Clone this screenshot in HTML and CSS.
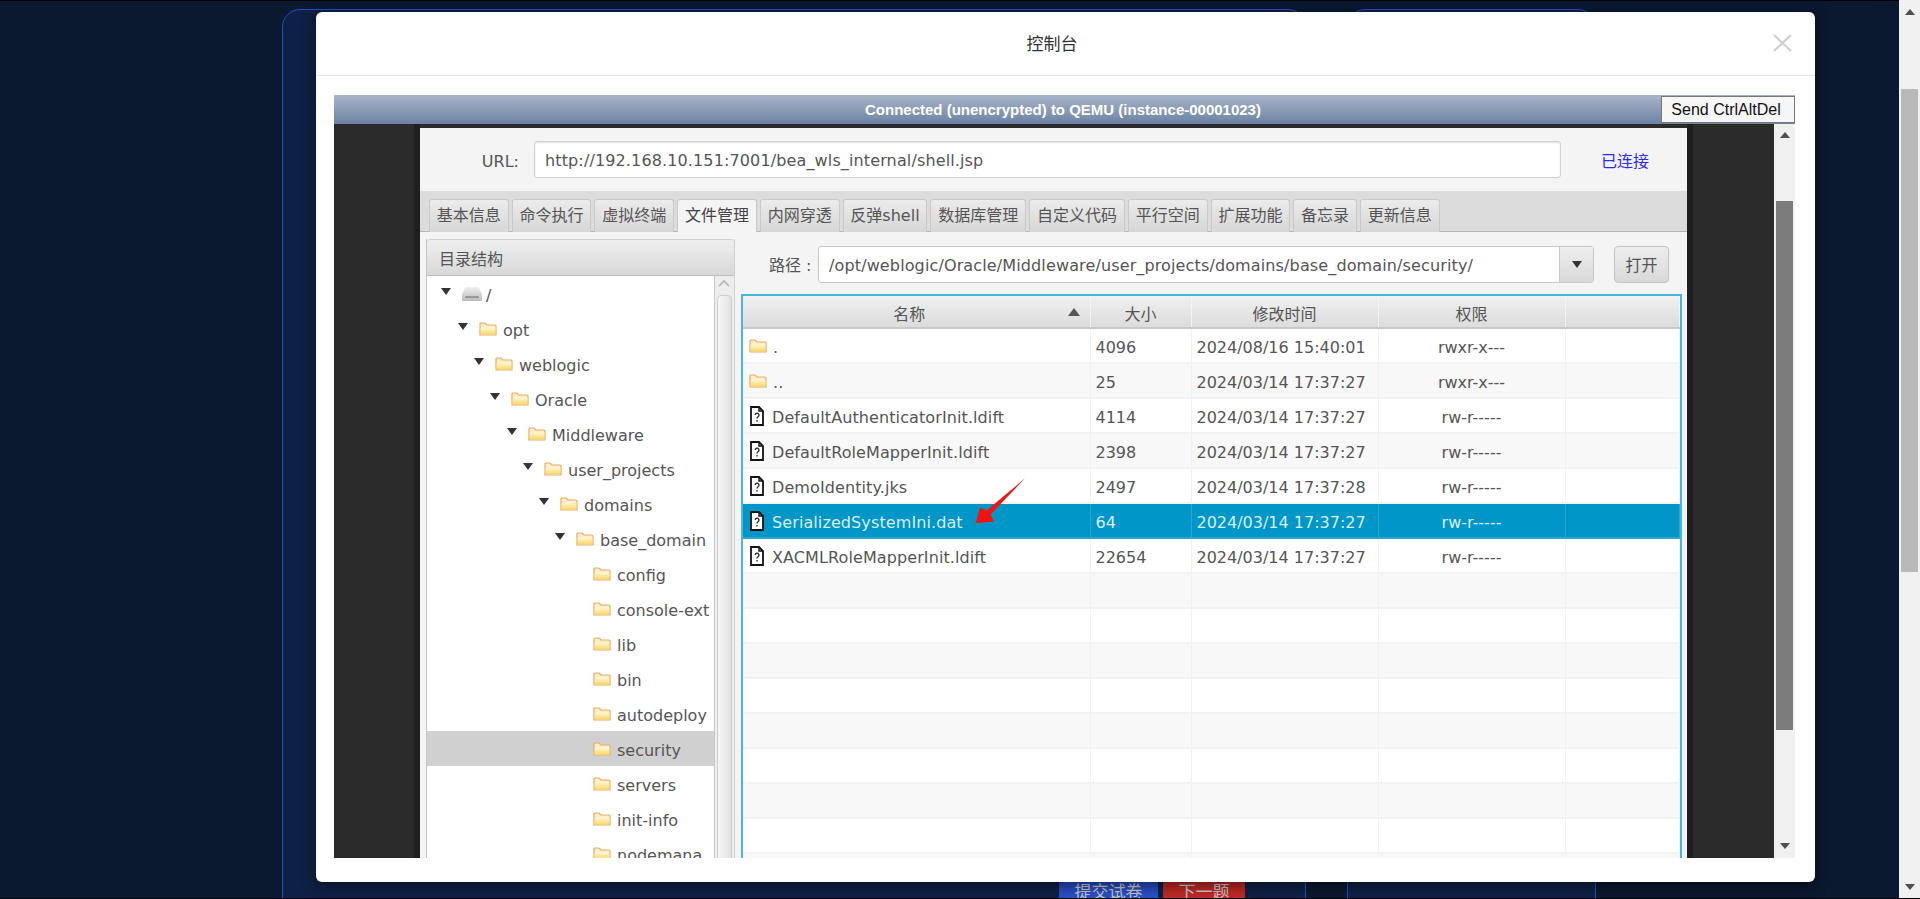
FILE: index.html
```html
<!DOCTYPE html>
<html lang="en">
<head>
    <meta charset="UTF-8">
    <meta name="viewport" content="width=device-width, initial-scale=1.0">
    <title>控制台</title>
    <link rel="stylesheet" href="styles.css">
</head>
<body>
    <svg class="defs" width="0" height="0">
        <defs>
            <linearGradient id="folderFill" x1="0" y1="0" x2="0" y2="1">
                <stop offset="0" stop-color="#fff8d8"/>
                <stop offset="1" stop-color="#f8d868"/>
            </linearGradient>
            <linearGradient id="driveFill" x1="0" y1="0" x2="0" y2="1">
                <stop offset="0" stop-color="#efefef"/>
                <stop offset="1" stop-color="#bdbdbd"/>
            </linearGradient>
            <symbol id="folder" viewBox="0 0 18 14">
                <path d="M1 13V2q0-1 1-1h4l2 2h8q1 0 1 1v9z" fill="#f8eecb" stroke="#ecaa60" stroke-width="1.2"/>
                <path d="M1.6 12.4V6.2l3-1h11.8v7.2z" fill="url(#folderFill)"/>
            </symbol>
            <symbol id="file" viewBox="0 0 16 20">
                <path d="M2 1h8l4 4v14H2z" fill="#fff" stroke="#111" stroke-width="1.8"/>
                <path d="M10 1v4h4" fill="none" stroke="#111" stroke-width="1.4"/>
                <path d="M6.2 9a1.9 1.9 0 1 1 2.8 1.7q-1 .6-1 1.8" fill="none" stroke="#222" stroke-width="1.3"/>
                <path d="M8 14v1.6" stroke="#222" stroke-width="1.3"/>
            </symbol>
            <symbol id="drive" viewBox="0 0 20 14">
                <path d="M3 1q.3-1 1-1h12q.7 0 1 1l3 6v6q0 1-1 1H1q-1 0-1-1V7z" fill="url(#driveFill)"/>
                <path d="M3 9h14v2H3z" fill="#9a9a9a"/>
            </symbol>
        </defs>
    </svg>

    <div class="page">
        <div class="card card-main">
            <div class="card-actions">
                <button class="btn-submit">提交试卷</button>
                <button class="btn-next">下一题</button>
            </div>
        </div>
        <div class="card card-side"></div>
    </div>

    <div class="page-scroll">
        <span class="tri-up"></span>
        <span class="page-thumb"></span>
        <span class="tri-down"></span>
    </div>

    <div class="modal">
        <div class="modal-header">
            <h4 class="modal-title">控制台</h4>
            <svg class="modal-close" width="19" height="18" viewBox="0 0 19 18">
                <path d="M1 1l17 16M18 1L1 17" stroke="#cfcfcf" stroke-width="2.2" fill="none"/>
            </svg>
        </div>
        <div class="modal-body">
            <div class="vnc-bar">
                <span class="vnc-status">Connected (unencrypted) to QEMU (instance-00001023)</span>
                <button class="vnc-send">Send CtrlAltDel</button>
            </div>
            <div class="vnc-screen">
                <div class="side-dark"></div>
                <div class="app">
                    <div class="url-row">
                        <label class="url-label">URL:</label>
                        <div class="field url-field">http://192.168.10.151:7001/bea_wls_internal/shell.jsp</div>
                        <span class="url-state">已连接</span>
                    </div>
                    <div class="tabs">
                        <span class="tab">基本信息</span>
                        <span class="tab">命令执行</span>
                        <span class="tab">虚拟终端</span>
                        <span class="tab active">文件管理</span>
                        <span class="tab">内网穿透</span>
                        <span class="tab">反弹shell</span>
                        <span class="tab">数据库管理</span>
                        <span class="tab">自定义代码</span>
                        <span class="tab">平行空间</span>
                        <span class="tab">扩展功能</span>
                        <span class="tab">备忘录</span>
                        <span class="tab">更新信息</span>
                    </div>
                    <div class="files">
                        <div class="tree-panel">
                            <div class="tree-title">目录结构</div>
                            <div class="tree-wrap">
                                <div class="tree">
                                    <div class="node lv0"><i class="caret"></i><svg class="ico-drive"><use href="#drive"/></svg><span>/</span></div>
                                    <div class="node lv1"><i class="caret"></i><svg class="ico-folder"><use href="#folder"/></svg><span>opt</span></div>
                                    <div class="node lv2"><i class="caret"></i><svg class="ico-folder"><use href="#folder"/></svg><span>weblogic</span></div>
                                    <div class="node lv3"><i class="caret"></i><svg class="ico-folder"><use href="#folder"/></svg><span>Oracle</span></div>
                                    <div class="node lv4"><i class="caret"></i><svg class="ico-folder"><use href="#folder"/></svg><span>Middleware</span></div>
                                    <div class="node lv5"><i class="caret"></i><svg class="ico-folder"><use href="#folder"/></svg><span>user_projects</span></div>
                                    <div class="node lv6"><i class="caret"></i><svg class="ico-folder"><use href="#folder"/></svg><span>domains</span></div>
                                    <div class="node lv7"><i class="caret"></i><svg class="ico-folder"><use href="#folder"/></svg><span>base_domain</span></div>
                                    <div class="node leaf"><svg class="ico-folder"><use href="#folder"/></svg><span>config</span></div>
                                    <div class="node leaf"><svg class="ico-folder"><use href="#folder"/></svg><span>console-ext</span></div>
                                    <div class="node leaf"><svg class="ico-folder"><use href="#folder"/></svg><span>lib</span></div>
                                    <div class="node leaf"><svg class="ico-folder"><use href="#folder"/></svg><span>bin</span></div>
                                    <div class="node leaf"><svg class="ico-folder"><use href="#folder"/></svg><span>autodeploy</span></div>
                                    <div class="node leaf current"><svg class="ico-folder"><use href="#folder"/></svg><span>security</span></div>
                                    <div class="node leaf"><svg class="ico-folder"><use href="#folder"/></svg><span>servers</span></div>
                                    <div class="node leaf"><svg class="ico-folder"><use href="#folder"/></svg><span>init-info</span></div>
                                    <div class="node leaf"><svg class="ico-folder"><use href="#folder"/></svg><span>nodemana</span></div>
                                </div>
                                <div class="tree-scroll">
                                    <svg class="tree-up" width="12" height="7" viewBox="0 0 12 7"><path d="M1 6l5-5 5 5" fill="none" stroke="#b0b0b0" stroke-width="1.5"/></svg>
                                    <div class="tree-thumb"></div>
                                </div>
                            </div>
                        </div>
                        <div class="file-side">
                            <div class="path-row">
                                <span class="path-label">路径 :</span>
                                <div class="combo">
                                    <div class="combo-text">/opt/weblogic/Oracle/Middleware/user_projects/domains/base_domain/security/</div>
                                    <div class="combo-arrow"><i class="caret"></i></div>
                                </div>
                                <button class="open-btn">打开</button>
                            </div>
                            <div class="table-wrap">
                                <table class="file-table">
                                    <colgroup>
                                        <col class="c-name"><col class="c-size"><col class="c-time"><col class="c-perm"><col>
                                    </colgroup>
                                    <thead>
                                        <tr>
                                            <th class="th-name">名称<i class="sort"></i></th>
                                            <th>大小</th>
                                            <th>修改时间</th>
                                            <th>权限</th>
                                            <th></th>
                                        </tr>
                                    </thead>
                                    <tbody>
                                        <tr><td><div class="fname"><svg class="ico-folder"><use href="#folder"/></svg>.</div></td><td>4096</td><td>2024/08/16 15:40:01</td><td class="perm">rwxr-x---</td><td></td></tr>
                                        <tr><td><div class="fname"><svg class="ico-folder"><use href="#folder"/></svg>..</div></td><td>25</td><td>2024/03/14 17:37:27</td><td class="perm">rwxr-x---</td><td></td></tr>
                                        <tr><td><div class="fname"><svg class="ico-file"><use href="#file"/></svg>DefaultAuthenticatorInit.ldift</div></td><td>4114</td><td>2024/03/14 17:37:27</td><td class="perm">rw-r-----</td><td></td></tr>
                                        <tr><td><div class="fname"><svg class="ico-file"><use href="#file"/></svg>DefaultRoleMapperInit.ldift</div></td><td>2398</td><td>2024/03/14 17:37:27</td><td class="perm">rw-r-----</td><td></td></tr>
                                        <tr><td><div class="fname"><svg class="ico-file"><use href="#file"/></svg>DemoIdentity.jks</div></td><td>2497</td><td>2024/03/14 17:37:28</td><td class="perm">rw-r-----</td><td></td></tr>
                                        <tr class="selected"><td><div class="fname"><svg class="ico-file"><use href="#file"/></svg>SerializedSystemIni.dat</div></td><td>64</td><td>2024/03/14 17:37:27</td><td class="perm">rw-r-----</td><td></td></tr>
                                        <tr><td><div class="fname"><svg class="ico-file"><use href="#file"/></svg>XACMLRoleMapperInit.ldift</div></td><td>22654</td><td>2024/03/14 17:37:27</td><td class="perm">rw-r-----</td><td></td></tr>
                                        <tr><td></td><td></td><td></td><td></td><td></td></tr>
                                        <tr><td></td><td></td><td></td><td></td><td></td></tr>
                                        <tr><td></td><td></td><td></td><td></td><td></td></tr>
                                        <tr><td></td><td></td><td></td><td></td><td></td></tr>
                                        <tr><td></td><td></td><td></td><td></td><td></td></tr>
                                        <tr><td></td><td></td><td></td><td></td><td></td></tr>
                                        <tr><td></td><td></td><td></td><td></td><td></td></tr>
                                        <tr><td></td><td></td><td></td><td></td><td></td></tr>
                                        <tr><td></td><td></td><td></td><td></td><td></td></tr>
                                    </tbody>
                                </table>
                            </div>
                        </div>
                    </div>
                </div>
                <div class="side-dark side-right"></div>
                <div class="vnc-scroll">
                    <span class="tri-up"></span>
                    <span class="vnc-thumb"></span>
                    <span class="tri-down"></span>
                </div>
            </div>
        </div>
        <svg class="red-arrow" width="60" height="52" viewBox="0 0 60 52">
            <path d="M55 3.3L20.5 39.5 24 46.5 5.7 48.3 10 32.5 16.5 35.5z" fill="#f01414"/>
        </svg>
    </div>
</body>
</html>
```
FILE: styles.css
```css
html, body {
    height: 100%;
    margin: 0;
    overflow: hidden;
}

body {
    display: flex;
    position: relative;
    box-sizing: border-box;
    border-bottom: 1px solid #000;
    background: #0a1830;
    font-family: "DejaVu Sans", "Noto Sans CJK SC", sans-serif;
    font-size: 16px;
    color: #555;
}

.defs {
    position: absolute;
}

/* page behind the dialog */
.page {
    flex: 1;
    display: flex;
    gap: 41px;
    box-sizing: border-box;
    padding: 8px 0 0 282px;
    border-top: 1px solid #000;
    overflow: hidden;
}

.card {
    box-sizing: border-box;
    height: 1000px;
    border: 1px solid #2450c8;
    border-radius: 18px;
    background: #0e2045;
}

.card-main {
    width: 1024px;
    padding: 860px 60px 0 0;
}

.card-side {
    width: 249px;
}

.card-actions {
    display: flex;
    justify-content: flex-end;
    gap: 5px;
}

.card-actions button {
    height: 40px;
    padding: 0;
    border: none;
    color: #c6c6c6;
    font-family: "Noto Sans CJK SC", sans-serif;
    font-size: 17px;
}

.btn-submit {
    width: 99px;
    background: linear-gradient(#2040b0, #2c58d0);
}

.btn-next {
    width: 82px;
    background: linear-gradient(#a82420, #cc2c28);
}

.page-scroll {
    width: 21px;
    display: flex;
    flex-direction: column;
    align-items: center;
    background: #f1f1f1;
}

.page-scroll .tri-up {
    margin-top: 9px;
}

.page-thumb {
    width: 17px;
    height: 483px;
    margin-top: 74px;
    background: #b9b9b9;
}

.page-scroll .tri-down {
    margin-top: 312px;
}

.tri-up, .tri-down {
    display: block;
    width: 0;
    height: 0;
    border-left: 5px solid transparent;
    border-right: 5px solid transparent;
}

.tri-up {
    border-bottom: 6px solid #505050;
}

.tri-down {
    border-top: 6px solid #505050;
}

/* dialog */
.modal {
    position: absolute;
    left: 316px;
    top: 12px;
    width: 1499px;
    height: 870px;
    border-radius: 6px;
    background: #fff;
    box-shadow: 0 3px 14px rgba(0, 0, 0, 0.5);
    overflow: hidden;
}

.modal-header {
    display: flex;
    align-items: center;
    height: 63px;
    padding-left: 15px;
    padding-right: 23px;
    border-bottom: 1px solid #e5e5e5;
}

.modal-title {
    flex: 1;
    margin: -2px 0 0;
    text-align: center;
    font-family: "Noto Sans CJK SC", sans-serif;
    font-size: 17px;
    font-weight: 400;
    color: #333;
}

.modal-close {
    margin-top: -2px;
}

.modal-body {
    padding: 19px 20px 0 18px;
}

.vnc-bar {
    position: relative;
    height: 29px;
    line-height: 30px;
    padding-right: 3px;
    text-align: center;
    background: linear-gradient(#a9b5c9, #8a9bb4 50%, #6c83a4);
}

.vnc-status {
    font-family: "Liberation Sans", Arial, sans-serif;
    font-size: 15px;
    font-weight: 700;
    color: #fff;
}

.vnc-send {
    position: absolute;
    right: 0;
    top: 1px;
    width: 134px;
    height: 27px;
    padding: 0 4px 0 0;
    border: 1px solid #777;
    background: #f6f6f6;
    font-family: "Liberation Sans", Arial, sans-serif;
    font-size: 16px;
    color: #111;
}

.vnc-screen {
    display: flex;
    height: 734px;
    background: #2b2b2b;
    overflow: hidden;
}

.side-dark {
    width: 80px;
    border-right: 6px solid #1f1f22;
}

.side-right {
    flex: 1;
    border-right: none;
    border-left: 6px solid #1f1f22;
}

.vnc-scroll {
    width: 21px;
    display: flex;
    flex-direction: column;
    align-items: center;
    padding-top: 8px;
    box-sizing: border-box;
    background: #f0f0f0;
}

.vnc-thumb {
    width: 17px;
    height: 529px;
    margin-top: 63px;
    background: #7b7b7b;
}

.vnc-scroll .tri-down {
    margin-top: 113px;
}

/* java app */
.app {
    width: 1267px;
    margin-top: 4px;
    background: #f4f4f4;
}

.url-row {
    display: flex;
    align-items: center;
    height: 63px;
}

.url-label {
    width: 99px;
    padding-top: 3px;
    text-align: right;
    margin-right: 15px;
}

.field {
    box-sizing: border-box;
    background: #fff;
    border: 1px solid #d0d0d0;
    border-radius: 3px;
}

.url-field {
    width: 1027px;
    height: 37px;
    line-height: 38px;
    padding-left: 10px;
    letter-spacing: 0.13px;
    box-shadow: inset 0 1px 2px rgba(0, 0, 0, 0.12);
}

.url-state {
    margin-left: 40px;
    color: #2a2af0;
}

.tabs {
    display: flex;
    gap: 3px;
    box-sizing: border-box;
    height: 41px;
    padding: 8px 0 0 9px;
    background: #dcdcdc;
    border-bottom: 1px solid #b5b5b5;
}

.tab {
    box-sizing: border-box;
    height: 33px;
    line-height: 32px;
    padding: 0 6.85px;
    border: 1px solid #c8c8c8;
    border-bottom: none;
    border-radius: 3px 3px 0 0;
    background: linear-gradient(#ececec, #d6d6d6);
    white-space: nowrap;
}

.tab.active {
    background: #f4f4f4;
    color: #444;
}

.files {
    display: flex;
    padding: 7px 0 0 6px;
}

.tree-panel {
    box-sizing: border-box;
    width: 309px;
    border-left: 1px solid #c4c4c4;
    border-right: 1px solid #d0d0d0;
}

.tree-title {
    box-sizing: border-box;
    height: 37px;
    line-height: 39px;
    padding-left: 12px;
    background: linear-gradient(#efefef, #d8d8d8);
    border-top: 1px solid #d0d0d0;
    border-bottom: 1px solid #bcbcbc;
    border-radius: 3px 3px 0 0;
}

.tree-wrap {
    display: flex;
    height: 600px;
}

.tree {
    width: 287px;
    background: #fff;
}

.node {
    display: flex;
    align-items: center;
    height: 35px;
    white-space: nowrap;
}

.node span {
    margin-top: 4px;
}

.node svg {
    margin-top: 1px;
}

.caret {
    display: block;
    flex: none;
    width: 0;
    height: 0;
    margin-top: -5px;
    border-left: 5px solid transparent;
    border-right: 5px solid transparent;
    border-top: 7px solid #333;
}

.node .caret {
    margin-right: 11px;
}

.lv0 { padding-left: 14px; }
.lv1 { padding-left: 31px; }
.lv2 { padding-left: 47px; }
.lv3 { padding-left: 63px; }
.lv4 { padding-left: 80px; }
.lv5 { padding-left: 96px; }
.lv6 { padding-left: 112px; }
.lv7 { padding-left: 128px; }
.leaf { padding-left: 166px; }

.current {
    background: #d0d0d0;
}

.ico-drive {
    width: 20px;
    height: 14px;
    margin-right: 4px;
}

.ico-folder {
    flex: none;
    width: 18px;
    height: 14px;
    margin-right: 6px;
}

.ico-file {
    flex: none;
    width: 16px;
    height: 20px;
    margin-right: 7px;
}

.tree-scroll {
    position: relative;
    width: 19px;
    background: #ededed;
    border-left: 1px solid #c8c8c8;
}

.tree-up {
    display: block;
    margin: 4px 0 0 3px;
}

.tree-thumb {
    height: 600px;
    margin: 8px 2px 0 2px;
    border: 1px solid #cfcfcf;
    border-radius: 4px 4px 0 0;
    background: linear-gradient(90deg, #f6f6f6, #e2e2e2);
}

.file-side {
    margin-left: 6px;
    width: 941px;
}

.path-row {
    display: flex;
    align-items: center;
    height: 36px;
    margin-top: 7px;
    padding-left: 28px;
}

.path-label {
    width: 49px;
    white-space: nowrap;
}

.combo {
    display: flex;
    box-sizing: border-box;
    width: 776px;
    height: 37px;
    background: #fff;
    border: 1px solid #c8c8c8;
    border-radius: 3px;
}

.combo-text {
    flex: 1;
    line-height: 38px;
    padding-left: 10px;
    letter-spacing: 0.13px;
    white-space: nowrap;
}

.combo-arrow {
    display: flex;
    align-items: center;
    justify-content: center;
    width: 33px;
    border-left: 1px solid #c8c8c8;
    background: linear-gradient(#eeeeee, #d8d8d8);
}

.combo-arrow .caret {
    margin-top: 0;
}

.open-btn {
    width: 55px;
    height: 37px;
    margin-left: 20px;
    padding: 0;
    border: 1px solid #c4c4c4;
    border-radius: 4px;
    background: linear-gradient(#eeeeee, #d8d8d8);
    font: inherit;
    color: #555;
}

.table-wrap {
    box-sizing: border-box;
    height: 600px;
    margin-top: 12px;
    border: 2px solid #4ab5e0;
    border-bottom: none;
    background: #fff;
    overflow: hidden;
}

.file-table {
    table-layout: fixed;
    width: 937px;
    border-collapse: collapse;
}

.c-name { width: 347px; }
.c-size { width: 101px; }
.c-time { width: 187px; }
.c-perm { width: 187px; }

.file-table th {
    position: relative;
    box-sizing: border-box;
    height: 32px;
    padding: 2px 0 0;
    font-weight: 400;
    background: linear-gradient(#f0f0f0, #dcdcdc);
    border-right: 1px solid #f4f4f4;
    border-bottom: 2px solid #c8c8c8;
}

.file-table th.th-name {
    padding-right: 14px;
}

.sort {
    position: absolute;
    right: 10px;
    top: 12px;
    border-left: 6px solid transparent;
    border-right: 6px solid transparent;
    border-bottom: 8px solid #555;
}

.file-table td {
    box-sizing: border-box;
    height: 35px;
    padding: 3px 0 0 5px;
    border-right: 1px solid #f0f0f0;
    border-bottom: 2px solid #f2f2f2;
    white-space: nowrap;
}

.file-table tbody tr:nth-child(even) {
    background: #f8f8f8;
}

.file-table td.perm {
    padding-left: 0;
    text-align: center;
}

.fname {
    display: flex;
    align-items: center;
    padding-left: 1px;
    letter-spacing: 0.1px;
}

.fname svg {
    margin-top: -3px;
}

.file-table tbody tr.selected {
    background: #0096c8;
    color: #d8eef8;
}

.file-table tr.selected td {
    border-bottom-color: #2ea6d2;
    border-right-color: #2ea6d2;
}

.red-arrow {
    position: absolute;
    left: 654px;
    top: 463px;
}
```
